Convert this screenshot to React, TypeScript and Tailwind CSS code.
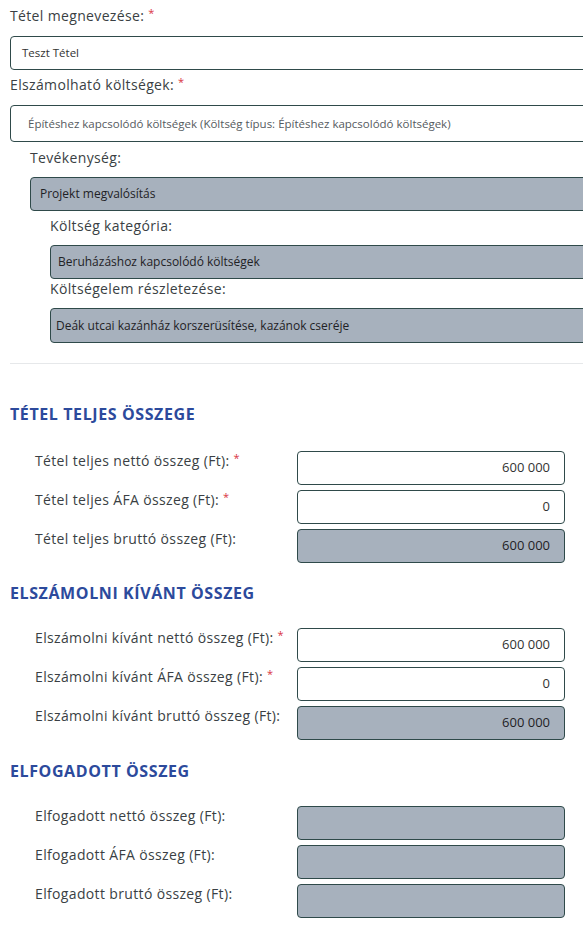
import type { ReactNode } from "react";

const FONT = "font-['Open_Sans','Liberation_Sans',sans-serif]";

function Req() {
  return <span className="relative -top-[4px] ml-[4px] text-[11px] text-[#d9343f]">*</span>;
}

function Label({ children, req, className = "" }: { children: ReactNode; req?: boolean; className?: string }) {
  return (
    <div className={`text-[14px] leading-[20px] tracking-[0.35px] text-[#3a3f44] ${className}`}>
      {children}
      {req && <Req />}
    </div>
  );
}

function Field({ value, gray, className = "" }: { value?: string; gray?: boolean; className?: string }) {
  return (
    <div
      className={`flex items-center whitespace-nowrap rounded-[4px] border border-[#2f4a4a] ${gray ? "bg-[#a7b1bd] text-[#1f2226]" : "bg-white text-[#333]"} ${className}`}
    >
      {value}
    </div>
  );
}

function AmountRow({ label, value, req, gray, first }: { label: string; value?: string; req?: boolean; gray?: boolean; first?: boolean }) {
  return (
    <div className={`flex ${first ? "" : "mt-[5px]"}`}>
      <Label req={req} className="w-[287px] shrink-0 pl-[25px]">{label}</Label>
      <Field value={value} gray={gray} className="h-[34px] w-[268px] justify-end pr-[14px] text-[13px]" />
    </div>
  );
}

function Heading({ children, className = "" }: { children: ReactNode; className?: string }) {
  return <h2 className={`text-[16px] font-bold leading-[20px] tracking-[0.6px] text-[#2c4a9c] ${className}`}>{children}</h2>;
}

export default function App() {
  return (
    <div className={`min-h-[928px] w-[583px] overflow-hidden bg-white pl-[10px] ${FONT}`}>
      <Label req className="pt-[6px]">Tétel megnevezése:</Label>
      <Field value="Teszt Tétel" className="mt-[9px] h-[34px] w-[620px] pl-[11px] text-[11.5px]" />
      <Label req className="mt-[5px]">Elszámolható költségek:</Label>
      <Field
        value="Építéshez kapcsolódó költségek (Költség típus: Építéshez kapcsolódó költségek)"
        className="mt-[9px] h-[37px] w-[620px] pl-[17px] text-[11.5px] !text-[#555a60]"
      />

      <div className="pl-[20px]">
        <Label className="mt-[6px]">Tevékenység:</Label>
        <Field value="Projekt megvalósítás" gray className="mt-[9px] h-[34px] w-[600px] pl-[9px] text-[12px]" />
        <div className="pl-[20px]">
          <Label className="mt-[5px]">Költség kategória:</Label>
          <Field value="Beruházáshoz kapcsolódó költségek" gray className="mt-[9px] h-[34px] w-[600px] pl-[7px] text-[12px]" />
          <Label>Költségelem részletezése:</Label>
          <Field value="Deák utcai kazánház korszerüsítése, kazánok cseréje" gray className="mt-[9px] h-[35px] w-[600px] pl-[5px] text-[12px]" />
        </div>
      </div>

      <hr className="mt-[20px] border-t border-[#e6e8ea]" />

      <Heading className="mt-[40px]">TÉTEL TELJES ÖSSZEGE</Heading>
      <div className="mt-[27px]">
        <AmountRow first req label="Tétel teljes nettó összeg (Ft):" value="600 000" />
        <AmountRow req label="Tétel teljes ÁFA összeg (Ft):" value="0" />
        <AmountRow gray label="Tétel teljes bruttó összeg (Ft):" value="600 000" />
      </div>

      <Heading className="mt-[20px]">ELSZÁMOLNI KÍVÁNT ÖSSZEG</Heading>
      <div className="mt-[25px]">
        <AmountRow first req label="Elszámolni kívánt nettó összeg (Ft):" value="600 000" />
        <AmountRow req label="Elszámolni kívánt ÁFA összeg (Ft):" value="0" />
        <AmountRow gray label="Elszámolni kívánt bruttó összeg (Ft):" value="600 000" />
      </div>

      <Heading className="mt-[21px]">ELFOGADOTT ÖSSZEG</Heading>
      <div className="mt-[25px]">
        <AmountRow first gray label="Elfogadott nettó összeg (Ft):" />
        <AmountRow gray label="Elfogadott ÁFA összeg (Ft):" />
        <AmountRow gray label="Elfogadott bruttó összeg (Ft):" />
      </div>
    </div>
  );
}
